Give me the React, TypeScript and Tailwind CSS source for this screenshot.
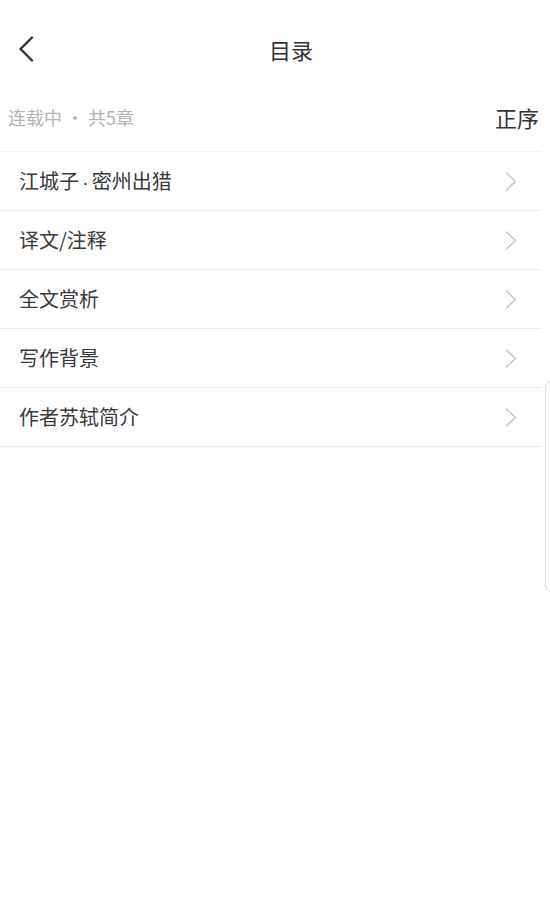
const chapters = ['江城子·密州出猎', '译文/注释', '全文赏析', '写作背景', '作者苏轼简介']

function BackIcon() {
  return (
    <svg width="16" height="26" viewBox="0 0 16 26" fill="none" className="shrink-0">
      <path d="M14 1.5 L2.5 13 L14 24.5" stroke="#333" strokeWidth="2.4" strokeLinecap="round" strokeLinejoin="round" />
    </svg>
  )
}

function RowArrow() {
  return (
    <svg width="12" height="19" viewBox="0 0 12 19" fill="none" className="shrink-0">
      <path d="M1.5 1 L10.5 9.5 L1.5 18" stroke="#c4c4c4" strokeWidth="1.4" strokeLinecap="round" strokeLinejoin="round" />
    </svg>
  )
}

// the CJK font draws "·" full width; the reference uses the narrow Latin dot
function ChapterTitle({ text }: { text: string }) {
  const parts = text.split('·')
  return (
    <span className="text-[20px] leading-none text-[#3a3a3a]">
      {parts.map((p, i) => (
        <span key={i}>
          {i > 0 && (
            <span className="mx-[3px]" style={{ fontFamily: '"Liberation Sans", sans-serif' }}>
              ·
            </span>
          )}
          {p}
        </span>
      ))}
    </span>
  )
}

export default function App() {
  return (
    <div
      className="relative w-[550px] h-[919px] overflow-hidden bg-white text-[#333]"
      style={{ fontFamily: '"Noto Sans CJK SC", "Noto Sans", sans-serif' }}
    >
      <header className="flex items-center h-[98px] pl-[18px] pr-[18px]">
        <BackIcon />
        <h1 className="flex-1 pl-[16px] text-center text-[22px] leading-none font-normal text-[#333]">目录</h1>
      </header>

      <div className="flex items-center justify-between h-[38px] pl-[8px] pr-[11px]">
        <span className="text-[18px] leading-none text-[#b3b3b3]">连载中 · 共5章</span>
        <span className="text-[22px] leading-none text-[#333]">正序</span>
      </div>

      <ul className="mt-[15px] w-[541px] border-t border-[#f3f3f3]">
        {chapters.map((title) => (
          <li
            key={title}
            className="flex items-center justify-between h-[59px] pl-[19px] pr-[24px] border-b border-[#ececec]"
          >
            <ChapterTitle text={title} />
            <RowArrow />
          </li>
        ))}
      </ul>

      <div className="absolute left-[545px] top-[380px] w-[12px] h-[213px] rounded-l-[8px] border border-[#dcdcdc] bg-white" />
    </div>
  )
}
